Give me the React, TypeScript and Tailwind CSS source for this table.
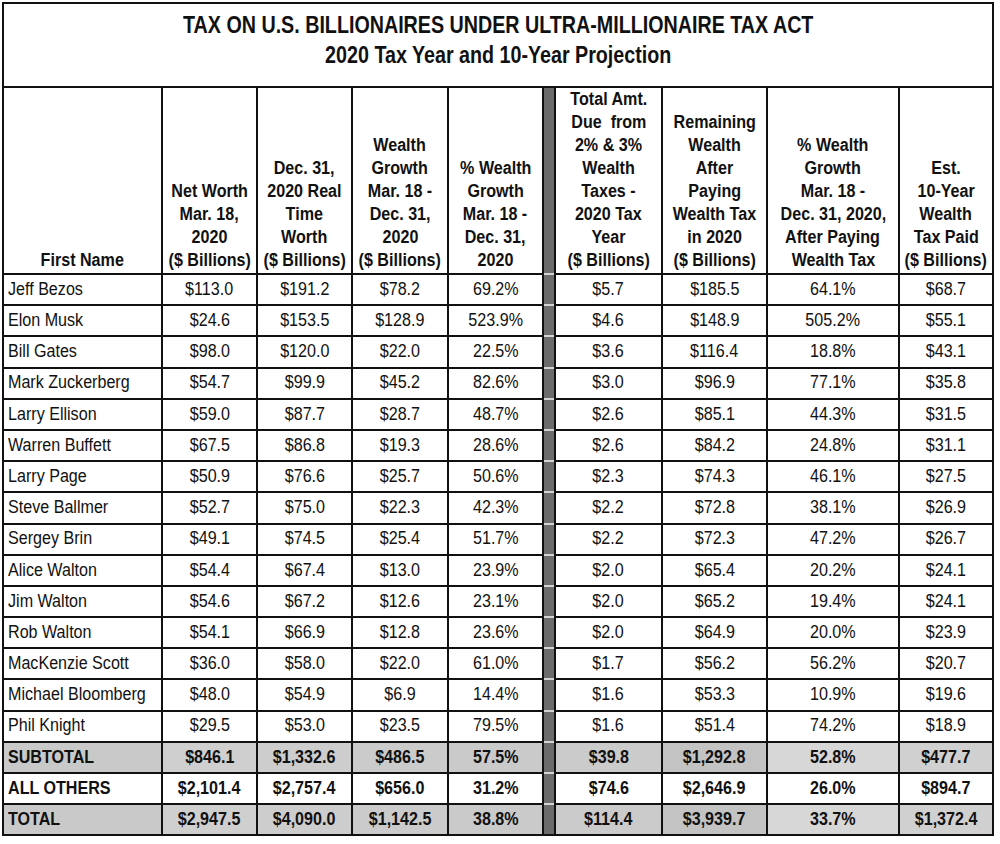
import React from "react";

type Row = [string, string, string, string, string, string, string, string, string];

const rows: Row[] = [
  ["Jeff Bezos", "$113.0", "$191.2", "$78.2", "69.2%", "$5.7", "$185.5", "64.1%", "$68.7"],
  ["Elon Musk", "$24.6", "$153.5", "$128.9", "523.9%", "$4.6", "$148.9", "505.2%", "$55.1"],
  ["Bill Gates", "$98.0", "$120.0", "$22.0", "22.5%", "$3.6", "$116.4", "18.8%", "$43.1"],
  ["Mark Zuckerberg", "$54.7", "$99.9", "$45.2", "82.6%", "$3.0", "$96.9", "77.1%", "$35.8"],
  ["Larry Ellison", "$59.0", "$87.7", "$28.7", "48.7%", "$2.6", "$85.1", "44.3%", "$31.5"],
  ["Warren Buffett", "$67.5", "$86.8", "$19.3", "28.6%", "$2.6", "$84.2", "24.8%", "$31.1"],
  ["Larry Page", "$50.9", "$76.6", "$25.7", "50.6%", "$2.3", "$74.3", "46.1%", "$27.5"],
  ["Steve Ballmer", "$52.7", "$75.0", "$22.3", "42.3%", "$2.2", "$72.8", "38.1%", "$26.9"],
  ["Sergey Brin", "$49.1", "$74.5", "$25.4", "51.7%", "$2.2", "$72.3", "47.2%", "$26.7"],
  ["Alice Walton", "$54.4", "$67.4", "$13.0", "23.9%", "$2.0", "$65.4", "20.2%", "$24.1"],
  ["Jim Walton", "$54.6", "$67.2", "$12.6", "23.1%", "$2.0", "$65.2", "19.4%", "$24.1"],
  ["Rob Walton", "$54.1", "$66.9", "$12.8", "23.6%", "$2.0", "$64.9", "20.0%", "$23.9"],
  ["MacKenzie Scott", "$36.0", "$58.0", "$22.0", "61.0%", "$1.7", "$56.2", "56.2%", "$20.7"],
  ["Michael Bloomberg", "$48.0", "$54.9", "$6.9", "14.4%", "$1.6", "$53.3", "10.9%", "$19.6"],
  ["Phil Knight", "$29.5", "$53.0", "$23.5", "79.5%", "$1.6", "$51.4", "74.2%", "$18.9"],
];

const summary: { row: Row; shaded: boolean }[] = [
  { row: ["SUBTOTAL", "$846.1", "$1,332.6", "$486.5", "57.5%", "$39.8", "$1,292.8", "52.8%", "$477.7"], shaded: true },
  { row: ["ALL OTHERS", "$2,101.4", "$2,757.4", "$656.0", "31.2%", "$74.6", "$2,646.9", "26.0%", "$894.7"], shaded: false },
  { row: ["TOTAL", "$2,947.5", "$4,090.0", "$1,142.5", "38.8%", "$114.4", "$3,939.7", "33.7%", "$1,372.4"], shaded: true },
];

const headers: string[][] = [
  ["First Name"],
  ["Net Worth", "Mar. 18,", "2020", "($ Billions)"],
  ["Dec. 31,", "2020 Real", "Time", "Worth", "($ Billions)"],
  ["Wealth", "Growth", "Mar. 18 -", "Dec. 31,", "2020", "($ Billions)"],
  ["% Wealth", "Growth", "Mar. 18 -", "Dec. 31,", "2020"],
  ["Total Amt.", "Due\u00a0 from", "2% & 3%", "Wealth", "Taxes -", "2020 Tax", "Year", "($ Billions)"],
  ["Remaining", "Wealth", "After", "Paying", "Wealth Tax", "in 2020", "($ Billions)"],
  ["% Wealth", "Growth", "Mar. 18 -", "Dec. 31, 2020,", "After Paying", "Wealth Tax"],
  ["Est.", "10-Year", "Wealth", "Tax Paid", "($ Billions)"],
];

// shaded backgrounds per column (index 0..8) for subtotal/total rows
const shadeBg = [
  "bg-[#c9c9c9]",
  "bg-[#cfcfcf]",
  "bg-[#cdcdcd]",
  "bg-[#cbcbcb]",
  "bg-[#cacaca]",
  "bg-[#cbcbcb]",
  "bg-[#c3c3c3]",
  "bg-[#d7d7d7]",
  "bg-[#d0d0d0]",
];

function HeaderCell({ lines }: { lines: string[] }) {
  return (
    <div className="bg-white flex flex-col items-center justify-end pb-[1px] text-center font-bold text-[17.5px] leading-[23px] text-[#111]">
      {lines.map((l, i) => (
        <div key={i} className="whitespace-nowrap scale-x-[0.92]">
          {l}
        </div>
      ))}
    </div>
  );
}

function GrayCell({ top }: { top: boolean }) {
  return top ? (
    <div className="bg-[#6b6b6b]" />
  ) : (
    <div className="bg-[#6b6b6b] -mt-[2px] border-t-[2px] border-[#d4d4d4]" />
  );
}

function DataRow({ row, bold, shaded }: { row: Row; bold: boolean; shaded: boolean }) {
  const weight = bold ? "font-bold" : "font-normal";
  return (
    <>
      {row.map((v, i) => {
        const bg = shaded ? shadeBg[i] : "bg-white";
        const align = i === 0 ? "justify-start pl-[4px]" : "justify-center";
        const origin = i === 0 ? "origin-left" : "origin-center";
        return (
          <React.Fragment key={i}>
            {i === 5 && <GrayCell top={false} />}
            <div
              className={`${bg} ${align} ${weight} flex items-center whitespace-nowrap text-[17.5px] leading-none text-[#111]`}
            >
              <span className={`inline-block scale-x-[0.92] ${origin}`}>{v}</span>
            </div>
          </React.Fragment>
        );
      })}
    </>
  );
}

export default function App() {
  return (
    <div className="w-[1000px] h-[844px] bg-white font-['Liberation_Sans',Arial,sans-serif]">
      <div className="ml-[2px] mt-[2px] w-[992px] bg-[#111] p-[2px] grid gap-[2px] grid-cols-[157px_93px_93px_94px_93px_10px_105px_103px_130px_92px] grid-rows-[82px_185px_repeat(18,29.2px)]">
        <div className="col-span-10 bg-white flex flex-col items-center pt-[6px] font-bold text-[23px] leading-[30px] text-[#111]">
          <div className="whitespace-nowrap scale-x-[0.856]">TAX ON U.S. BILLIONAIRES UNDER ULTRA-MILLIONAIRE TAX ACT</div>
          <div className="whitespace-nowrap scale-x-[0.856]">2020 Tax Year and 10-Year Projection</div>
        </div>

        {headers.map((h, i) => (
          <React.Fragment key={i}>
            {i === 5 && <GrayCell top={true} />}
            <HeaderCell lines={h} />
          </React.Fragment>
        ))}

        {rows.map((r, i) => (
          <DataRow key={i} row={r} bold={false} shaded={false} />
        ))}
        {summary.map((s, i) => (
          <DataRow key={"s" + i} row={s.row} bold={true} shaded={s.shaded} />
        ))}
      </div>
    </div>
  );
}
